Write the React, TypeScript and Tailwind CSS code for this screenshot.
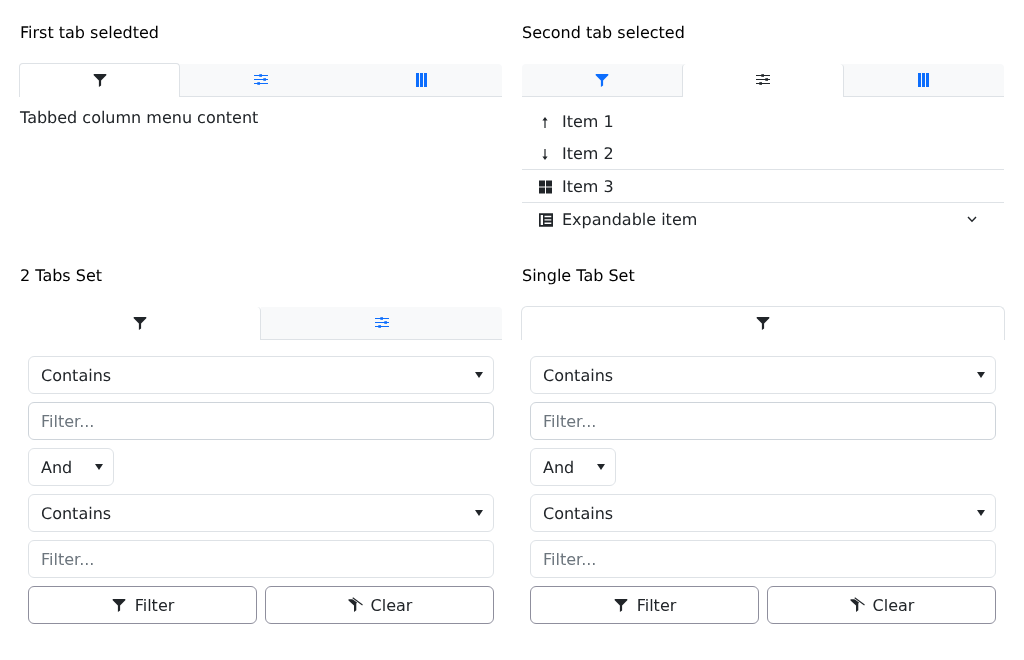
import React from "react";

const FilterIcon = () => (
  <svg width="16" height="16" viewBox="0 0 16 16" fill="currentColor">
    <path d="M1.7 2H14.3V3.2L9.1 8.5V13.6L6.9 15V8.5L1.7 3.2Z" />
  </svg>
);

const SlidersIcon = () => (
  <svg width="16" height="16" viewBox="0 0 16 16" fill="currentColor">
    <rect x="1" y="3" width="14" height="1" />
    <rect x="1" y="7" width="14" height="1" />
    <rect x="1" y="11" width="14" height="1" />
    <rect x="6.3" y="2" width="2.7" height="3" opacity="0.8" />
    <rect x="10.3" y="6" width="2.7" height="3" opacity="0.8" />
    <rect x="4.3" y="10" width="2.7" height="3" opacity="0.8" />
  </svg>
);

const ColumnsIcon = () => (
  <svg width="16" height="16" viewBox="0 0 16 16" fill="currentColor">
    <rect x="2" y="1" width="3" height="14" />
    <rect x="6" y="1" width="3" height="14" />
    <rect x="10" y="1" width="3" height="14" />
  </svg>
);

const ClearIcon = () => (
  <svg width="16" height="16" viewBox="0 0 16 16" fill="currentColor">
    <path d="M1.5 2.2H7L10.2 5.6L9.3 6.4V13.3L7 15V8.5L1.5 3.5Z" />
    <path d="M5.7 0.8L15.5 8" stroke="#ffffff" strokeWidth="2.6" fill="none" />
    <path d="M5.7 0.8L15.5 8" stroke="currentColor" strokeWidth="1.1" fill="none" />
  </svg>
);

const Caret = () => (
  <svg width="8" height="6" viewBox="0 0 8 6" fill="currentColor" className="shrink-0 text-[#212529]">
    <path d="M0 0H8L4 6Z" />
  </svg>
);

type TabItem = { icon: React.ReactNode; active?: boolean };

function Tabs({ items, variant, cols }: { items: TabItem[]; variant: "first" | "middle" | "two" | "single"; cols: string }) {
  const activeClass = {
    first: "-ml-px -mt-px border-x border-t border-[#dee2e6] rounded-t-[4px]",
    middle: "-mx-px border-x border-[#dee2e6] rounded-t-[4px]",
    two: "border-r border-[#dee2e6] rounded-tr-[4px]",
    single: "-mx-px -mt-px border-x border-t border-[#dee2e6] rounded-t-[6px]",
  }[variant];
  return (
    <div className={"grid h-[33px] w-full " + cols}>
      {items.map((t, i) => (
        <div
          key={i}
          className={
            "flex items-center justify-center " +
            (t.active
              ? "relative bg-white pb-px text-[#212529] " + activeClass
              : "border-b border-[#dee2e6] bg-[#f8f9fa] text-[#0d6efd]" +
                (i === items.length - 1 ? " rounded-tr-[4px]" : "") +
                (i === 0 ? " rounded-tl-[4px]" : ""))
          }
        >
          {t.icon}
        </div>
      ))}
    </div>
  );
}

function Select({ label, narrow }: { label: string; narrow?: boolean }) {
  return (
    <div
      className={
        "flex h-[38px] items-center justify-between rounded-[6px] border border-[#dee2e6] bg-white pl-3 pr-[10px] text-[#212529] " +
        (narrow ? "w-[86px]" : "w-full")
      }
    >
      <span className="pt-[2px]">{label}</span>
      <Caret />
    </div>
  );
}

function Input({ light }: { light?: boolean }) {
  return (
    <input
      readOnly
      placeholder="Filter..."
      className={
        "block h-[38px] w-full rounded-[6px] border bg-white px-3 outline-none placeholder:text-[#6c757d] " +
        (light ? "border-[#dee2e6]" : "border-[#ced4da]")
      }
    />
  );
}

function FilterForm() {
  return (
    <div className="flex flex-col gap-2 px-2 pt-4">
      <Select label="Contains" />
      <Input />
      <Select label="And" narrow />
      <Select label="Contains" />
      <Input light />
      <div className="flex gap-2">
        <button className="flex h-[38px] flex-1 items-center justify-center gap-2 rounded-[6px] border border-[#8f8f9d] bg-white text-[#212529]">
          <FilterIcon />
          <span className="pt-[2px]">Filter</span>
        </button>
        <button className="flex h-[38px] flex-1 items-center justify-center gap-2 rounded-[6px] border border-[#8f8f9d] bg-white text-[#212529]">
          <ClearIcon />
          <span className="pt-[2px]">Clear</span>
        </button>
      </div>
    </div>
  );
}

function Row({ icon, label, trailing, border, h = "h-8" }: { icon: React.ReactNode; label: string; trailing?: React.ReactNode; border?: boolean; h?: string }) {
  return (
    <div className={"flex items-center pl-4 pr-[27px] " + h + " " + (border ? "border-t border-[#dee2e6]" : "")}>
      <span className="flex w-[24px] shrink-0 items-center pt-[2px] text-[#212529]">{icon}</span>
      <span className="flex-1 pt-[2px] text-[#212529]">{label}</span>
      {trailing}
    </div>
  );
}

function Section({ title, children }: { title: string; children: React.ReactNode }) {
  return (
    <div className="flex w-[482px] flex-col">
      <div className="mb-5 h-6 pt-px leading-6 text-black">{title}</div>
      {children}
    </div>
  );
}

export default function App() {
  const filter = <FilterIcon />;
  const sliders = <SlidersIcon />;
  const columns = <ColumnsIcon />;
  return (
    <div className="h-[660px] w-[1024px] bg-white pl-5 pt-5 font-['DejaVu_Sans',sans-serif] text-base text-[#212529] [text-rendering:geometricPrecision]">
      <div className="grid grid-cols-[482px_482px] grid-rows-[223px_auto] gap-x-5 gap-y-5 [will-change:transform]">
        <Section title="First tab seledted">
          <Tabs variant="first" cols="grid-cols-[160px_1fr_1fr]" items={[{ icon: filter, active: true }, { icon: sliders }, { icon: columns }]} />
          <div className="pt-[9px] leading-6 text-[#212529]">Tabbed column menu content</div>
        </Section>
        <Section title="Second tab selected">
          <Tabs variant="middle" cols="grid-cols-3" items={[{ icon: filter }, { icon: sliders, active: true }, { icon: columns }]} />
          <div className="pt-2">
            <Row
              icon={
                <svg width="14" height="14" viewBox="0 0 14 14" fill="currentColor">
                  <path d="M6.4 5.4H4.4L7 2L9.6 5.4H7.6V13H6.4Z" />
                </svg>
              }
              label="Item 1"
            />
            <Row
              icon={
                <svg width="14" height="14" viewBox="0 0 14 14" fill="currentColor">
                  <path d="M6.4 2H7.6V9.6H9.6L7 13L4.4 9.6H6.4Z" />
                </svg>
              }
              label="Item 2"
            />
            <Row
              border
              h="h-[33px]"
              icon={
                <svg width="14" height="14" viewBox="0 0 14 14" fill="currentColor">
                  <rect x="1" y="0.5" width="6" height="6" />
                  <rect x="8" y="0.5" width="6" height="6" />
                  <rect x="1" y="7.5" width="6" height="6" />
                  <rect x="8" y="7.5" width="6" height="6" />
                </svg>
              }
              label="Item 3"
            />
            <Row
              border
              h="h-[33px]"
              icon={
                <svg width="15" height="14" viewBox="0 0 15 14" fill="currentColor">
                  <path
                    fillRule="evenodd"
                    d="M1 0.3H15V13.7H1ZM2.7 2V12H5V2ZM6.5 2.8V4.2H13.3V2.8ZM6.5 6.2V7.6H13.3V6.2ZM6.5 9.6V11H13.3V9.6Z"
                  />
                </svg>
              }
              label="Expandable item"
              trailing={
                <svg width="10" height="7" viewBox="0 0 10 7" fill="none" stroke="currentColor" strokeWidth="1.4" className="text-[#212529]">
                  <path d="M1 1L5 5.2L9 1" />
                </svg>
              }
            />
          </div>
        </Section>
        <Section title="2 Tabs Set">
          <Tabs variant="two" cols="grid-cols-2" items={[{ icon: filter, active: true }, { icon: sliders }]} />
          <FilterForm />
        </Section>
        <Section title="Single Tab Set">
          <Tabs variant="single" cols="grid-cols-1" items={[{ icon: filter, active: true }]} />
          <FilterForm />
        </Section>
      </div>
    </div>
  );
}
